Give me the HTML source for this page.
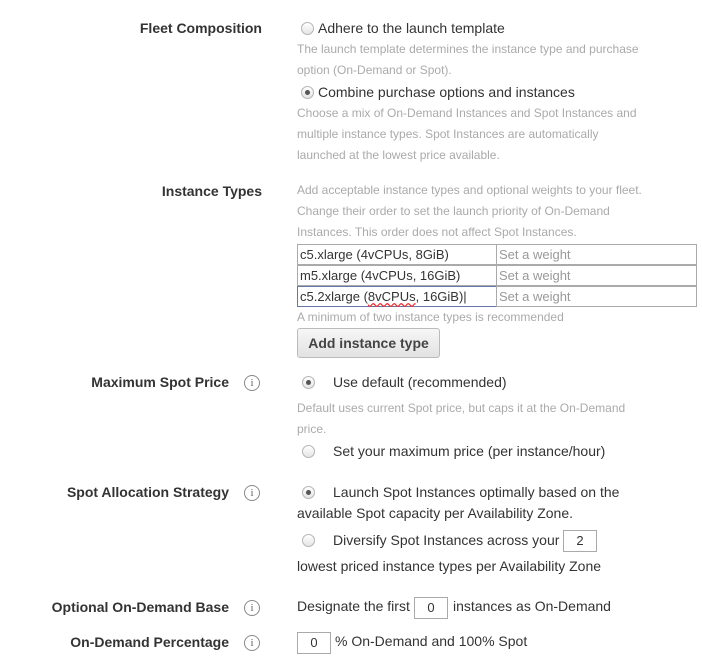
<!DOCTYPE html>
<html><head><meta charset="utf-8"><style>
*{margin:0;padding:0;box-sizing:border-box}
body{width:702px;height:661px;background:#fff;font-family:"Liberation Sans",Arial,sans-serif;color:#333;position:relative;overflow:hidden}
.a{position:absolute;white-space:nowrap;line-height:18px}
.lb{font-weight:bold;font-size:14px;color:#333;text-align:right}
.t{font-size:14px;color:#333;margin-top:-1px}
.h{font-size:12px;color:#aaa;line-height:21px}
.r{position:absolute;width:13px;height:13px;border-radius:50%;border:1px solid #b5b5b5;background:linear-gradient(#fff,#e4e4e4);margin-top:1px}
.r.on::after{content:"";position:absolute;left:3px;top:3px;width:5px;height:5px;border-radius:50%;background:#555}
.i{position:absolute;width:16px;height:16px;border-radius:50%;border:1px solid #888;font-size:11px;line-height:14px;text-align:center;color:#666;font-family:"Liberation Serif",serif}
.in{position:absolute;border:1px solid #aaa;background:#fff;font-size:13px;line-height:19px;padding-left:2px}
.nb{position:absolute;border:1px solid #aaa;background:#fff;font-size:13px;text-align:center;line-height:19px}
</style></head><body>
<div class="a lb" style="right:440px;top:19px">Fleet Composition</div>
<div class="r" style="left:301px;top:21px"></div>
<div class="a t" style="left:318px;top:20px">Adhere to the launch template</div>
<div class="a h" style="left:297px;top:39px">The launch template determines the instance type and purchase<br>option (On-Demand or Spot).</div>
<div class="r on" style="left:301px;top:85px"></div>
<div class="a t" style="left:318px;top:84px">Combine purchase options and instances</div>
<div class="a h" style="left:297px;top:103px">Choose a mix of On-Demand Instances and Spot Instances and<br>multiple instance types. Spot Instances are automatically<br>launched at the lowest price available.</div>

<div class="a lb" style="right:440px;top:182px">Instance Types</div>
<div class="a h" style="left:297px;top:180px">Add acceptable instance types and optional weights to your fleet.<br>Change their order to set the launch priority of On-Demand<br>Instances. This order does not affect Spot Instances.</div>
<div class="in" style="left:297px;top:244px;width:200px;height:21px">c5.xlarge (4vCPUs, 8GiB)</div>
<div class="in" style="left:496px;top:244px;width:201px;height:21px;color:#999">Set a weight</div>
<div class="in" style="left:297px;top:265px;width:200px;height:21px">m5.xlarge (4vCPUs, 16GiB)</div>
<div class="in" style="left:496px;top:265px;width:201px;height:21px;color:#999">Set a weight</div>
<div class="in" style="left:297px;top:286px;width:200px;height:21px;border-color:#6677aa">c5.2xlarge (<span style="text-decoration:underline wavy #e33">8vCPUs</span>, 16GiB)|</div>
<div class="in" style="left:496px;top:286px;width:201px;height:21px;color:#999">Set a weight</div>
<div class="a h" style="left:297px;top:307px">A minimum of two instance types is recommended</div>
<div class="a" style="left:297px;top:328px;width:143px;height:30px;border:1px solid #bbb;border-radius:3px;background:linear-gradient(#f6f6f6,#e2e2e2);font-weight:bold;font-size:14px;line-height:28px;text-align:center;color:#444">Add instance type</div>

<div class="a lb" style="right:473px;top:373px">Maximum Spot Price</div>
<div class="i" style="left:244px;top:375px">i</div>
<div class="r on" style="left:302px;top:375px"></div>
<div class="a t" style="left:333px;top:374px">Use default (recommended)</div>
<div class="a h" style="left:297px;top:398px">Default uses current Spot price, but caps it at the On-Demand<br>price.</div>
<div class="r" style="left:302px;top:444px"></div>
<div class="a t" style="left:333px;top:443px">Set your maximum price (per instance/hour)</div>

<div class="a lb" style="right:473px;top:483px">Spot Allocation Strategy</div>
<div class="i" style="left:244px;top:485px">i</div>
<div class="r on" style="left:302px;top:485px"></div>
<div class="a t" style="left:333px;top:484px">Launch Spot Instances optimally based on the</div>
<div class="a t" style="left:297px;top:505px">available Spot capacity per Availability Zone.</div>
<div class="r" style="left:302px;top:533px"></div>
<div class="a t" style="left:333px;top:532px">Diversify Spot Instances across your</div>
<div class="nb" style="left:563px;top:530px;width:34px;height:22px;line-height:20px">2</div>
<div class="a t" style="left:297px;top:558px">lowest priced instance types per Availability Zone</div>

<div class="a lb" style="right:473px;top:598px">Optional On-Demand Base</div>
<div class="i" style="left:244px;top:600px">i</div>
<div class="a t" style="left:297px;top:598px">Designate the first</div>
<div class="nb" style="left:414px;top:597px;width:34px;height:22px;line-height:20px">0</div>
<div class="a t" style="left:453px;top:598px">instances as On-Demand</div>

<div class="a lb" style="right:473px;top:633px">On-Demand Percentage</div>
<div class="i" style="left:244px;top:635px">i</div>
<div class="nb" style="left:297px;top:632px;width:34px;height:22px;line-height:20px">0</div>
<div class="a t" style="left:335px;top:633px">% On-Demand and 100% Spot</div>
</body></html>
